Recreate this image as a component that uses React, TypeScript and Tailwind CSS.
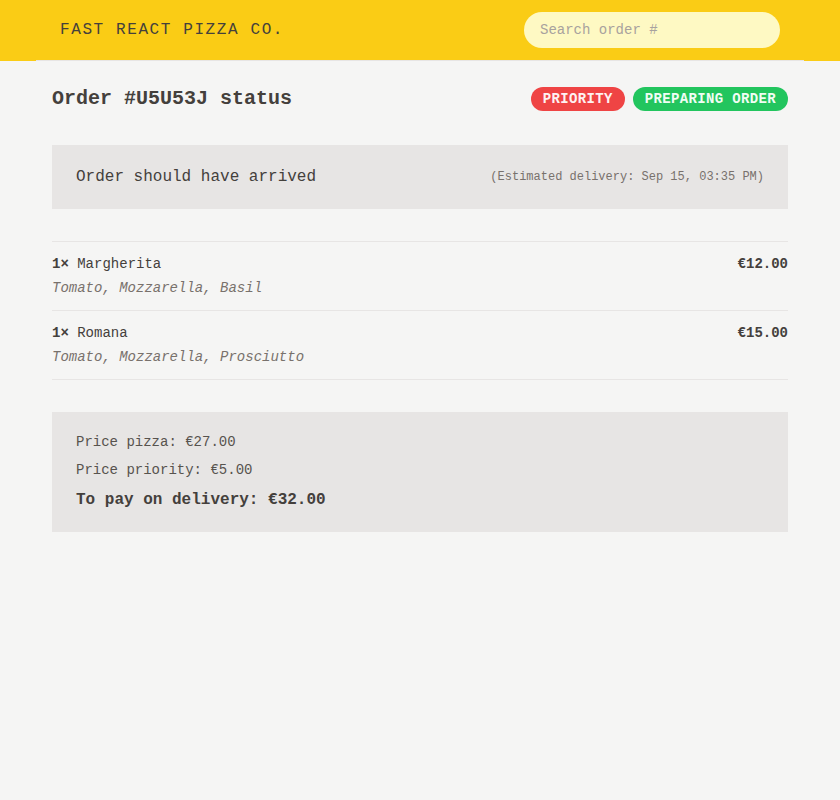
export default function App() {
  const items = [
    { qty: 1, name: "Margherita", price: "€12.00", ing: "Tomato, Mozzarella, Basil" },
    { qty: 1, name: "Romana", price: "€15.00", ing: "Tomato, Mozzarella, Prosciutto" },
  ];
  return (
    <div
      className="min-h-screen bg-[#f5f5f4] text-[#44403c]"
      style={{ fontFamily: '"Liberation Mono", "Courier New", monospace' }}
    >
      <header className="flex items-center justify-between bg-[#facc15] px-[60px] pb-[13px] pt-3">
        <a className="text-base uppercase tracking-widest">Fast React Pizza Co.</a>
        <input
          placeholder="Search order #"
          className="h-9 w-64 rounded-full bg-[#fef9c3] px-4 text-sm placeholder:text-[#a8a29e] focus:outline-none"
        />
      </header>
      <main className="relative mx-auto -mt-px max-w-3xl space-y-8 border-t border-[#e7e5e4] px-4 py-6">
        <div className="flex items-center justify-between">
          <h2 className="text-xl font-bold">Order #U5U53J status</h2>
          <div className="flex gap-2">
            <span className="rounded-full bg-[#ef4444] px-3 py-0.5 text-sm font-bold uppercase tracking-wide text-[#fef2f2]">
              Priority
            </span>
            <span className="rounded-full bg-[#22c55e] px-3 py-0.5 text-sm font-bold uppercase tracking-wide text-[#f0fdf4]">
              Preparing order
            </span>
          </div>
        </div>
        <div className="flex items-center justify-between bg-[#e7e5e4] px-6 py-5">
          <p className="font-medium">Order should have arrived</p>
          <p className="text-xs text-[#78716c]">(Estimated delivery: Sep 15, 03:35 PM)</p>
        </div>
        <ul className="divide-y divide-[#e7e5e4] border-y border-[#e7e5e4]">
          {items.map((it) => (
            <li key={it.name} className="space-y-1 py-3">
              <div className="flex items-center justify-between text-sm">
                <p>
                  <span className="font-bold">{it.qty}×</span> {it.name}
                </p>
                <p className="font-bold">{it.price}</p>
              </div>
              <p className="text-sm italic text-[#78716c]">{it.ing}</p>
            </li>
          ))}
        </ul>
        <div className="space-y-2 bg-[#e7e5e4] px-6 py-5">
          <p className="text-sm font-medium text-[#57534e]">Price pizza: €27.00</p>
          <p className="text-sm font-medium text-[#57534e]">Price priority: €5.00</p>
          <p className="font-bold">To pay on delivery: €32.00</p>
        </div>
      </main>
    </div>
  );
}
